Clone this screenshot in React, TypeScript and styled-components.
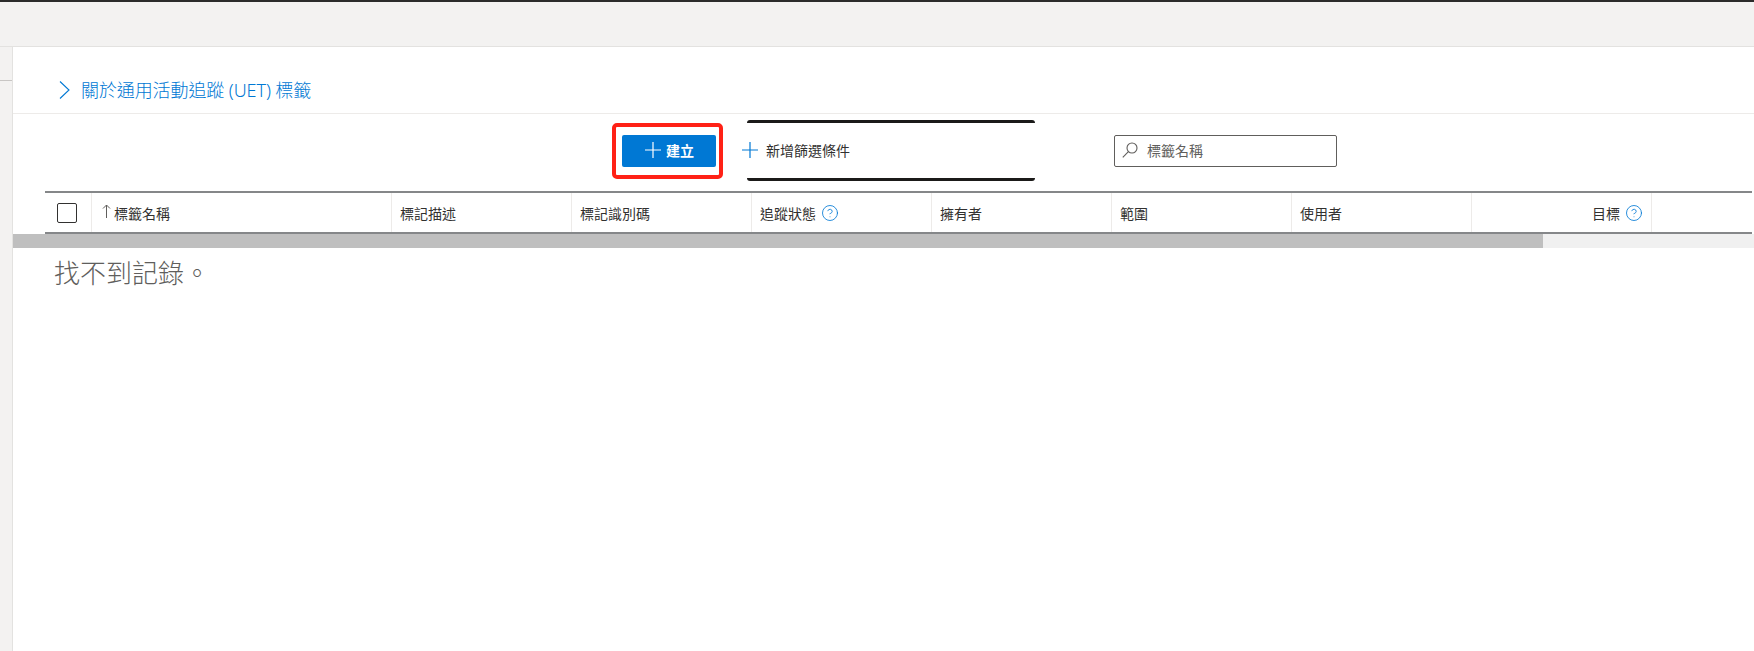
import styled, { createGlobalStyle } from 'styled-components';
import { CircleHelp } from 'lucide-react';

const Global = createGlobalStyle`
  html, body {
    margin: 0;
    height: 100%;
    overflow: hidden;
    background: #fff;
  }
  body {
    font-family: "Noto Sans", "Noto Sans CJK TC", sans-serif;
    color: #323130;
  }
`;

const Shell = styled.div`
  display: flex;
  flex-direction: column;
  height: 651px;
  border-top: 2px solid #2b2b2b;
`;

const TopBar = styled.div`
  flex: none;
  height: 44px;
  background: #f3f2f1;
  border-bottom: 1px solid #e3e2e0;
`;

const Body = styled.div`
  flex: 1;
  display: flex;
  min-height: 0;
`;

const Sidebar = styled.div`
  flex: none;
  box-sizing: border-box;
  width: 13px;
  background: #f3f2f1;
  border-right: 1px solid #e3e2e0;
  padding-top: 33px;
`;

const SidebarRule = styled.div`
  height: 1px;
  background: #c8c6c4;
`;

const Main = styled.main`
  flex: 1;
  min-width: 0;
  display: flex;
  flex-direction: column;
`;

const LinkRow = styled.div`
  flex: none;
  box-sizing: border-box;
  height: 67px;
  display: flex;
  align-items: flex-start;
  gap: 11px;
  padding: 34px 0 0 46px;
  border-bottom: 1px solid #edebe9;
`;

const HelpLink = styled.a`
  font-size: 18px;
  line-height: 18px;
  font-weight: 300;
  letter-spacing: -0.1px;
  color: #0078d4;
  text-decoration: none;
`;

const Toolbar = styled.div`
  flex: none;
  box-sizing: border-box;
  height: 77px;
  display: flex;
  align-items: flex-start;
  padding: 6px 0 0 599px;
`;

const Callout = styled.div`
  flex: none;
  box-sizing: border-box;
  width: 111px;
  height: 56px;
  padding: 8px 0 0 6px;
  margin-top: 3px;
  border: 4px solid #ff2116;
  border-radius: 5px;
`;

const CreateButton = styled.button`
  box-sizing: border-box;
  display: flex;
  align-items: center;
  justify-content: center;
  gap: 5px;
  width: 94px;
  height: 32px;
  padding: 0 0 2px 1px;
  border: 0;
  border-radius: 2px;
  background: #0078d4;
  color: #fff;
  font: 600 14px "Noto Sans", "Noto Sans CJK TC", sans-serif;
`;

const FilterBox = styled.div`
  flex: none;
  box-sizing: border-box;
  width: 288px;
  height: 61px;
  margin-left: 24px;
  padding-bottom: 2px;
  display: flex;
  align-items: center;
  gap: 8px;
  border-top: 3px solid #1b1a19;
  border-bottom: 3px solid #1b1a19;
  border-radius: 3px;
  color: #323130;
  font-size: 14px;
`;

const FilterIcon = styled.svg`
  margin-left: -5px;
  flex: none;
`;

const SearchBox = styled.div`
  flex: none;
  box-sizing: border-box;
  width: 223px;
  height: 32px;
  margin: 15px 0 0 79px;
  padding: 0 0 2px 7px;
  display: flex;
  align-items: center;
  gap: 9px;
  border: 1px solid #605e5c;
  border-radius: 2px;
  color: #605e5c;
  font-size: 14px;
`;

const HeaderRow = styled.div`
  flex: none;
  box-sizing: border-box;
  height: 43px;
  margin: 0 2px 0 32px;
  display: flex;
  border-top: 2px solid #858789;
  border-bottom: 2px solid #858789;
`;

const CheckCell = styled.div`
  flex: none;
  box-sizing: border-box;
  width: 47px;
  padding-left: 12px;
  display: flex;
  align-items: center;
  border-right: 1px solid #edebe9;
`;

const Checkbox = styled.span`
  box-sizing: border-box;
  display: block;
  width: 20px;
  height: 20px;
  border: 1px solid #323130;
  border-radius: 2px;
`;

const HeadCell = styled.div<{ $width: number; $right?: boolean }>`
  flex: none;
  box-sizing: border-box;
  width: ${(p) => p.$width}px;
  padding: 0 ${(p) => (p.$right ? '8px' : '8px')};
  display: flex;
  align-items: center;
  justify-content: ${(p) => (p.$right ? 'flex-end' : 'flex-start')};
  gap: 5px;
  border-right: 1px solid #edebe9;
  font-size: 14px;
  color: #323130;
`;

const SortLabel = styled.span`
  display: flex;
  align-items: center;
  gap: 3px;
  padding-left: 2px;
`;

const SortArrow = styled.svg`
  flex: none;
  margin-top: -3px;
`;

const HelpIcon = styled(CircleHelp)`
  flex: none;
  color: #0078d4;
`;

const ScrollTrack = styled.div`
  flex: none;
  height: 14px;
  background: #f0f0f0;
`;

const ScrollThumb = styled.div`
  height: 100%;
  background: #bfbfbf;
`;

const EmptyText = styled.p`
  margin: 0;
  padding: 7px 0 0 41px;
  font-size: 26px;
  line-height: 36px;
  font-weight: 300;
  color: #605e5c;
`;

type Column = { label: string; width: number; help?: boolean; right?: boolean };

const COLUMNS: Column[] = [
  { label: '標記描述', width: 180 },
  { label: '標記識別碼', width: 180 },
  { label: '追蹤狀態', width: 180, help: true },
  { label: '擁有者', width: 180 },
  { label: '範圍', width: 180 },
  { label: '使用者', width: 180 },
  { label: '目標', width: 180, help: true, right: true },
];

function PlusGlyph({ color }: { color: string }) {
  return (
    <svg width="16" height="16" viewBox="0 0 16 16" fill="none" stroke={color} strokeWidth="1.2">
      <path d="M8 0v16M0 8h16" />
    </svg>
  );
}

export default function App() {
  return (
    <>
      <Global />
      <Shell>
        <TopBar />
        <Body>
          <Sidebar>
            <SidebarRule />
          </Sidebar>
          <Main>
            <LinkRow>
              <svg width="11" height="18" viewBox="0 0 11 18" fill="none" stroke="#0078d4" strokeWidth="1.1">
                <path d="M1 .5 10 9l-9 8.5" />
              </svg>
              <HelpLink href="#">關於通用活動追蹤 (UET) 標籤</HelpLink>
            </LinkRow>
            <Toolbar>
              <Callout>
                <CreateButton type="button">
                  <PlusGlyph color="#ffffff" />
                  建立
                </CreateButton>
              </Callout>
              <FilterBox>
                <FilterIcon as="svg" width="16" height="16" viewBox="0 0 16 16" fill="none" stroke="#0078d4" strokeWidth="1.2">
                  <path d="M8 0v16M0 8h16" />
                </FilterIcon>
                新增篩選條件
              </FilterBox>
              <SearchBox>
                <svg width="16" height="16" viewBox="0 0 16 16" fill="none" stroke="#605e5c" strokeWidth="1.1">
                  <circle cx="10" cy="6" r="5" />
                  <path d="M6.4 9.6.8 15.4" />
                </svg>
                標籤名稱
              </SearchBox>
            </Toolbar>
            <HeaderRow>
              <CheckCell>
                <Checkbox />
              </CheckCell>
              <HeadCell $width={300}>
                <SortLabel>
                  <SortArrow as="svg" width="9" height="14" viewBox="0 0 9 14" fill="none" stroke="#605e5c" strokeWidth="1">
                    <path d="M4.5 14V1M1 4.5 4.5 1 8 4.5" />
                  </SortArrow>
                  標籤名稱
                </SortLabel>
              </HeadCell>
              {COLUMNS.map((col) => (
                <HeadCell key={col.label} $width={col.width} $right={col.right}>
                  {col.label}
                  {col.help && <HelpIcon size={18} strokeWidth={1.1} />}
                </HeadCell>
              ))}
            </HeaderRow>
            <ScrollTrack>
              <ScrollThumb style={{ width: `${(1530 / 1741) * 100}%` }} />
            </ScrollTrack>
            <EmptyText>找不到記錄。</EmptyText>
          </Main>
        </Body>
      </Shell>
    </>
  );
}
